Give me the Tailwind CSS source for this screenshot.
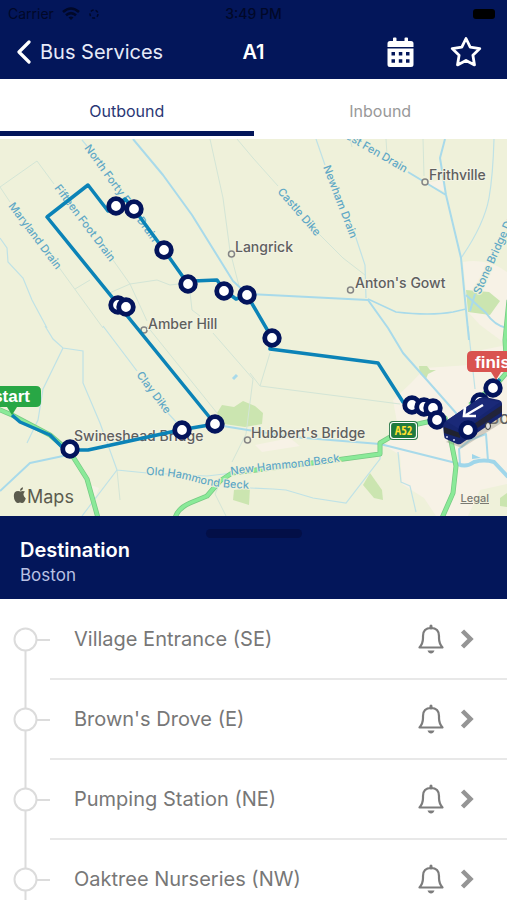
<!DOCTYPE html>
<html lang="en">
<head>
    <meta charset="UTF-8">
    <meta name="viewport" content="width=device-width, initial-scale=1.0">
    <title>A1 - Bus Services</title>
    <script src="https://cdn.jsdelivr.net/npm/@tailwindcss/browser@4"></script>
</head>
<body class="bg-white">
<div class="h-dvh flex flex-col overflow-hidden font-['Inter',sans-serif]">
    <!-- Header -->
    <header class="bg-[#03165a] shrink-0">
        <div class="grid grid-cols-[1fr_auto_1fr] items-center h-7 px-2 text-sm text-[#010828]">
            <div class="flex items-center gap-2">
                <span>Carrier</span>
                <svg class="w-[18px] h-[14px]" viewBox="0 0 18 14" fill="none" stroke="currentColor" stroke-width="2.6">
                    <path d="M1 5 Q9 -2 17 5"/>
                    <path d="M4 8.3 Q9 4 14 8.3"/>
                    <path d="M6.5 10.5 Q9 8.5 11.5 10.5 L9 13 Z" fill="currentColor" stroke="none"/>
                </svg>
                <svg class="w-3 h-3" viewBox="0 0 12 12" fill="none" stroke="currentColor" stroke-width="1.5" stroke-dasharray="3 2">
                    <circle cx="6" cy="6" r="4"/>
                </svg>
            </div>
            <span class="font-medium">3:49 PM</span>
            <div class="flex justify-end pr-1">
                <span class="w-[22px] h-[10px] rounded-[3px] bg-black"></span>
            </div>
        </div>
        <nav class="grid grid-cols-[1fr_auto_1fr] items-center h-[51px] pb-[3px] text-xl text-white">
            <button class="flex items-center gap-2 pl-4 text-[#e6eaf8]">
                <svg class="w-4 h-6" viewBox="0 0 16 24" fill="none" stroke="white" stroke-width="3.2" stroke-linecap="round" stroke-linejoin="round">
                    <path d="M13 2 L3 12 L13 22"/>
                </svg>
                Bus Services
            </button>
            <h1 class="font-semibold">A1</h1>
            <div class="flex justify-end gap-9 pr-[25px]">
                <button aria-label="Timetable">
                    <svg class="w-[27px] h-[31px]" viewBox="0 0 27 31" fill="white">
                        <path d="M3 4 H6 V1.5 Q6 .5 7 .5 H8.5 Q9.500 .5 9.500 1.500 V4 H17.500 V1.500 Q17.500 .5 18.500 .5 H20 Q21 .5 21 1.500 V4 H24 Q26.500 4 26.500 6.500 V10 H.5 V6.500 Q.5 4 3 4 Z"/>
                        <path fill-rule="evenodd" d="M.5 11.500 H26.500 V27.500 Q26.500 30 24 30 H3 Q.5 30 .5 27.500 Z M4.500 15 V18.500 H8 V15 Z M11.800 15 V18.500 H15.300 V15 Z M19 15 V18.500 H22.500 V15 Z M4.500 22.300 V25.800 H8 V22.300 Z M11.800 22.300 V25.800 H15.300 V22.300 Z M19 22.300 V25.800 H22.500 V22.300 Z"/>
                    </svg>
                </button>
                <button aria-label="Favourite">
                    <svg class="w-8 h-8" viewBox="0 0 32 32" fill="none" stroke="white" stroke-width="2.800" stroke-linejoin="round">
                        <path d="M16 2.500 L20.200 11.200 L29.800 12.600 L22.900 19.300 L24.500 28.900 L16 24.400 L7.500 28.900 L9.100 19.300 L2.200 12.600 L11.800 11.200 Z"/>
                    </svg>
                </button>
            </div>
        </nav>
    </header>

    <!-- Direction tabs -->
    <div class="grid grid-cols-2 h-[60px] pb-[3px] shrink-0 text-base" role="tablist">
        <button role="tab" aria-selected="true" class="pt-3 border-b-[5px] border-[#03165a] text-[#2a3775]">Outbound</button>
        <button role="tab" aria-selected="false" class="pt-3 border-b-[5px] border-transparent text-[#999]">Inbound</button>
    </div>

    <!-- Map -->
    <section class="relative shrink-0">
        <svg class="block w-full aspect-[507/377]" viewBox="0 139 507 377" preserveAspectRatio="xMidYMid slice">
            <defs>
                <path id="oldBeck" d="M146 475 Q172 475 195 482 T265 489"/>
                <path id="newBeck" d="M231 475 Q265 470 290 468 T360 458"/>
                <g id="stop">
                    <circle r="7.300" fill="white" stroke="#03145c" stroke-width="4.800"/>
                </g>
            </defs>
            <rect y="139" width="507" height="377" fill="#eff1da"/>

            <!-- built-up areas and woods -->
            <g fill="#f7f2e6">
                <path d="M463 262 Q488 258 507 272 V345 L480 325 L468 312 Z"/>
                <path d="M393 400 L412 382 L425 368 L470 365 L482 350 L507 345 V484 L480 490 L468 516 H436 L424 498 L402 484 L400 455 L385 446 L398 428 Z"/>
                <path d="M424 183 L443 180 L446 192 Z"/>
                <path d="M88 484 L99 488 L94 500 Z"/>
                <path d="M255 445 L290 438 L300 446 L262 452 Z"/>
            </g>
            <g fill="#cbe5b0">
                <path d="M217 413 L222 405 L234 407 L243 401 L255 406 L263 413 L262 424 L245 427 L224 424 Z"/>
                <path d="M466 290 L489 292 L500 301 L490 315 L468 312 Z"/>
                <path d="M419 366 L427 366 L430 370 L436 370 L428 374 L426 379 L420 374 Z"/>
                <path d="M363 485 L370 473 L382 490 L383 500 L374 498 Z"/>
                <path d="M234 490 L250 488 L249 505 L233 500 Z"/>
                <path d="M500 498 L507 493 V507 L500 506 Z"/>
            </g>

            <!-- minor roads and ditches -->
            <g fill="none" stroke="#d3e5d6" stroke-width="1">
                <path d="M210 139 L223 198 L230 251 L239 286"/>
                <path d="M0 187 L37 161 L54 184 M0 187 L10 202 M58 266 L103 328 M113 260 L130 284 L147 321"/>
                <path d="M75 289 L90 280 M107 294 L130 284 L157 280 L170 285 L187 283 M190 292 L192 310 L200 316"/>
                <path d="M237 139 L253 158 L278 186 M318 233 L343 258 L365 275"/>
                <path d="M423 139 L424 176 M386 139 L387 155"/>
                <path d="M270 353 L260 386 L400 404 M260 386 L250 373"/>
                <path d="M147 326 L217 413 M213 333 L253 379 L246 434 L232 462"/>
                <path d="M220 483 L215 494 L226 516"/>
                <path d="M117 470 L120 500 M350 139 L352 147"/>
            </g>
            <g fill="none" stroke="#bfe2e6" stroke-width="1.200">
                <path d="M0 238 L7 248 L8 262 L23 278 L32 300 L47 328 M45 326 L53 339 L63 348 L83 351 L83 383 L100 423 L117 470 L147 473 L207 476 L233 473"/>
                <path d="M63 348 L43 389 L38 420 L27 443 M117 470 L82 516 M103 326 L137 371 M166 411 L178 424"/>
                <path d="M316 139 L325 165 M355 235 L365 265 L366 298 M494 139 Q493 175 489 198 Q484 225 461 258"/>
                <path d="M468 326 L475 389 M398 452 L401 482 L410 486 L416 512"/>
                <path d="M250 488 L273 489 L286 490 L313 498 L346 503 L380 459 L381 444"/>
                <path d="M82 140 L87 146"/>
            </g>
            <g fill="none" stroke="#a8daea" stroke-width="2" stroke-linejoin="round">
                <path d="M133 139 L163 175 L192 215 L233 281 L247 294 L368 300 L388 328 L403 353 L456 413 L466 436"/>
                <path d="M368 299 L396 312 Q430 316 453 312 L466 309" stroke-width="1.400"/>
                <path d="M445 139 L440 158 L446 195 L461 258 L466 310 L469 340 M408 172 L446 195 M470 311 L475 294"/>
                <path d="M466 295 L486 313 Q495 326 507 328"/>
                <path d="M0 491 L30 463 L63 456 L72 453 M223 426 L254 431 L293 437 L380 444 L460 464"/>
                <path d="M460 464 L459 449 L470 440 L486 434 L488 461"/>
                <path d="M233 379 L237 375" stroke-width="3"/>
            </g>
            <path d="M458 464 Q466 468 474 462 Q484 459 494 462 L508 477" fill="none" stroke="#9fd6ea" stroke-width="4"/>
            <path d="M472 454 L481 458 L472 459 Z" fill="#9fd6ea"/>

            <!-- main roads -->
            <g fill="none" stroke-linejoin="round">
                <g stroke="#77c983" stroke-width="5">
                    <path d="M-2 409 L12 415 L50 435 L70 452 L87 479 L98 518"/>
                    <path d="M175 518 Q178 508 190 503 L207 496 L220 481 L232 473 L256 470 L336 460 L380 454 L380 443 L392 436 L418 424 L445 418 L451 441 L456 466 L453 493 L442 518"/>
                    <path d="M509 300 L505 340 L507 372 L497 384 L470 405"/>
                </g>
                <g stroke="#8aea98" stroke-width="3.500">
                    <path d="M-2 409 L12 415 L50 435 L70 452 L87 479 L98 518"/>
                    <path d="M175 518 Q178 508 190 503 L207 496 L220 481 L232 473 L256 470 L336 460 L380 454 L380 443 L392 436 L418 424 L445 418 L451 441 L456 466 L453 493 L442 518"/>
                    <path d="M509 300 L505 340 L507 372 L497 384 L470 405"/>
                </g>
            </g>

            <!-- water names -->
            <g fill="#5fa8c6" font-size="11" font-weight="500" stroke="#eff1da" stroke-width="2" paint-order="stroke">
                <text transform="translate(84 148) rotate(54)">North Forty Foot Drain</text>
                <text transform="translate(54 188) rotate(53)">Fifteen Foot Drain</text>
                <text transform="translate(8 206) rotate(53)">Maryland Drain</text>
                <text transform="translate(277 192) rotate(49)">Castle Dike</text>
                <text transform="translate(323 167) rotate(69)">Newham Drain</text>
                <text transform="translate(336 133) rotate(30)">West Fen Drain</text>
                <text transform="translate(480 295) rotate(-66)">Stone Bridge Drain</text>
                <text transform="translate(136 375) rotate(53)">Clay Dike</text>
                <text><textPath href="#oldBeck">Old Hammond Beck</textPath></text>
                <text><textPath href="#newBeck">New Hammond Beck</textPath></text>
            </g>

            <!-- places -->
            <g fill="#eff1da" stroke="#858585" stroke-width="1.500">
                <circle cx="231.500" cy="254" r="3"/>
                <circle cx="425" cy="182" r="3"/>
                <circle cx="350.500" cy="290" r="3"/>
                <circle cx="247.500" cy="440" r="3"/>
                <circle cx="144" cy="330" r="3"/>
            </g>
            <g fill="#5f5f5f" font-size="14" font-weight="500" stroke="#f3f4e4" stroke-width="2" paint-order="stroke">
                <text x="235" y="252">Langrick</text>
                <text x="429" y="180">Frithville</text>
                <text x="355" y="288">Anton's Gowt</text>
                <text x="148" y="329">Amber Hill</text>
                <text x="251" y="438">Hubbert's Bridge</text>
                <text x="74" y="441">Swineshead Bridge</text>
                <text x="488" y="424" font-size="17">Boston</text>
            </g>

            <!-- route -->
            <path d="M12 415 L20 422 L50 435 L62 447 L70 450 L88 450 L180 430 L215 424 L47 217 L88 185 L108 211 L116 206 L125 199 L134 209 L164 250 L188 284 L193 281 L217 280 L224 290 L236 299 L247 295 L272 338 L270 349 L378 363 L403 402 L412 405 M493 388 L500 379" fill="none" stroke="#0b83b7" stroke-width="3.500" stroke-linejoin="round"/>
            <g>
                <use href="#stop" x="116" y="206"/>
                <use href="#stop" x="134" y="209"/>
                <use href="#stop" x="164" y="250"/>
                <use href="#stop" x="188" y="284"/>
                <use href="#stop" x="224" y="291"/>
                <use href="#stop" x="247" y="295"/>
                <use href="#stop" x="272" y="338"/>
                <use href="#stop" x="118" y="305"/>
                <use href="#stop" x="126" y="307"/>
                <use href="#stop" x="215" y="424"/>
                <use href="#stop" x="182" y="430"/>
                <use href="#stop" x="70" y="449"/>
                <use href="#stop" x="412" y="405"/>
                <use href="#stop" x="424" y="407"/>
                <use href="#stop" x="433" y="408"/>
                <use href="#stop" x="437" y="420"/>
                <use href="#stop" x="480" y="402"/>
                <use href="#stop" x="493" y="388"/>
            </g>

            <!-- A52 shield -->
            <rect x="389" y="421" width="29" height="19" rx="4" fill="#2c7a4a"/>
            <rect x="390.500" y="422.500" width="26" height="16" rx="3" fill="#1f7a40" stroke="white" stroke-width="1.200"/>
            <text x="403.500" y="435" font-size="12" font-weight="700" fill="#ffe02e" text-anchor="middle" class="font-['Open_Sans_Condensed','Roboto_Condensed','Liberation_Sans_Narrow',sans-serif]">A52</text>

            <!-- bus -->
            <path d="M446 442 L462 448 L503 422 L498 404 Z" fill="#8d8878" opacity=".35"/>
            <path d="M443 426 Q443 423 446 421 L478 399 Q481 397 485 397 L499 400 Q502 401 502 404 L502 416 L462 443 Q460 445 457 444 L446 439 Q444 438 444 435 Z" fill="#16256f"/>
            <path d="M444 427 L460 433 V438 L444 433 Z" fill="#20222f"/>
            <path d="M462 432 L502 405 V412 L462 438 Z" fill="#22243a"/>
            <path d="M446 421 L480 398 L500 402 L461 430 Z" fill="#1a2978"/>
            <ellipse cx="488" cy="426" rx="2.500" ry="3.500" fill="#dedede" stroke="#333" stroke-width="1"/>
            <circle cx="447" cy="437" r="1" fill="#cfd6f5"/>
            <circle cx="454" cy="440" r="1" fill="#cfd6f5"/>
            <path d="M483 405 L466 415 M465 407 L464 416 L476 416" fill="none" stroke="white" stroke-width="2.600"/>
            <use href="#stop" x="468" y="430"/>

            <!-- start and finish flags -->
            <g font-size="17" font-weight="700" fill="white" class="font-['Liberation_Sans',sans-serif]">
                <path d="M-20 386 H36 Q41 386 41 391 V402 Q41 407 36 407 H17 L12 415 L7 407 H-20 Z" fill="#28a745"/>
                <text x="30" y="402" text-anchor="end">start</text>
                <path d="M472 351 H530 V372 H501 L496 380 L491 372 H472 Q467 372 467 367 V356 Q467 351 472 351 Z" fill="#d9534f"/>
                <text x="475" y="368">finish</text>
            </g>

            <!-- attribution -->
            <g fill="#5b5b4e">
                <path d="M20.500 491.500 Q23 490.300 25 491.600 Q21.500 494.500 25.800 498.500 Q24 503.500 21.800 503 Q20 502.200 18.200 503 Q16 503.500 14.200 499 Q12.800 493 16.300 491.300 Q18.500 490.700 20.500 491.500 Z M20 490.800 Q20 488 23 487.200 Q23.200 490.200 20 490.800 Z"/>
                <text x="27" y="503" font-size="18">Maps</text>
            </g>
        </svg>
        <a href="#legal" class="absolute right-[18px] bottom-[10px] text-[11px] font-medium text-[#7a7a72] underline">Legal</a>
    </section>

    <!-- Destination sheet -->
    <section class="relative bg-[#03165a] px-5 pt-5 pb-3 shrink-0">
        <span class="absolute top-[13px] left-1/2 -translate-x-1/2 w-24 h-[9px] rounded-full bg-[#030f47]"></span>
        <h2 class="text-xl leading-7 font-semibold text-white">Destination</h2>
        <p class="text-[17px] leading-[23px] text-[#b9c1e3]">Boston</p>
    </section>

    <!-- Stops -->
    <ul id="stopList" class="flex-1 min-h-0 pt-px overflow-y-auto [scrollbar-width:none]"></ul>
</div>

<script>
    const stops = [
        "Village Entrance (SE)",
        "Brown's Drove (E)",
        "Pumping Station (NE)",
        "Oaktree Nurseries (NW)"
    ];

    // One row per stop, the line starts at the first circle
    document.getElementById('stopList').innerHTML = stops.map((name, i) => `
        <li class="flex h-20 text-[#777]">
            <svg class="w-[50px] h-20 shrink-0" viewBox="0 0 50 80" fill="none" stroke="#dcdcdc" stroke-width="2">
                <path d="M25.500 ${i === 0 ? 40 : 0} V80 M37 40 H50"/>
                <circle cx="25.500" cy="39.500" r="11" fill="white"/>
            </svg>
            <div class="flex-1 flex items-center pl-6 pr-8 border-b-2 border-[#e8e8e8]">
                <span class="flex-1 text-xl">${name}</span>
                <button aria-label="Set alert" class="mr-[14px]">
                    <svg class="w-7 h-[30px]" viewBox="0 0 28 30" fill="none" stroke="#7c7c7c" stroke-width="2.200" stroke-linejoin="round">
                        <path d="M2.500 23.500 Q6 19.500 6 14 V12 Q6 4 14 4 Q22 4 22 12 V14 Q22 19.500 25.500 23.500 Z"/>
                        <path d="M14 4 V2" stroke-width="3" stroke-linecap="round"/>
                        <path d="M10.500 26.500 H17.500 Q16.500 29.500 14 29.500 Q11.500 29.500 10.500 26.500 Z" fill="#7c7c7c" stroke="none"/>
                    </svg>
                </button>
                <button aria-label="Stop details">
                    <svg class="w-4 h-5" viewBox="0 0 16 20" fill="none" stroke="#959595" stroke-width="4.500">
                        <path d="M3.500 2 L11.500 10 L3.500 18"/>
                    </svg>
                </button>
            </div>
        </li>
    `).join('');
</script>
</body>
</html>
